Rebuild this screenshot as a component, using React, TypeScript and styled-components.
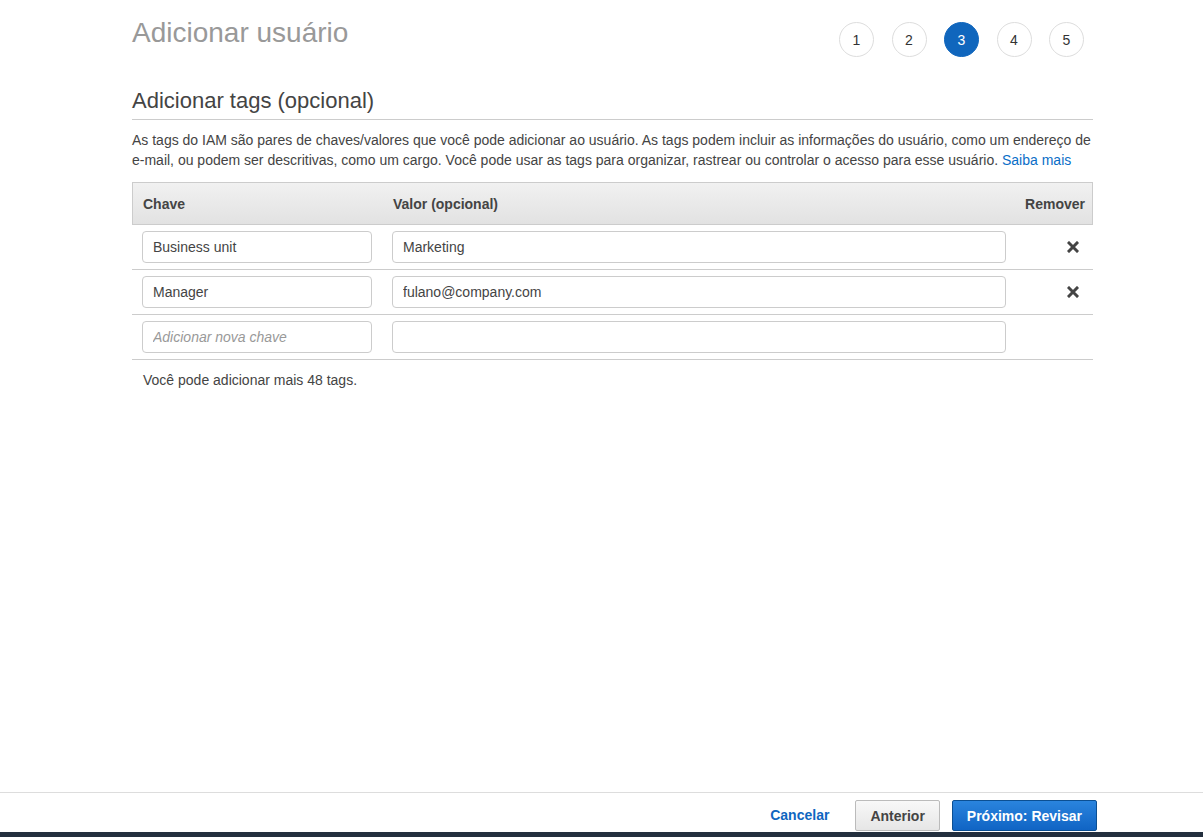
import React from 'react';
import styled, { createGlobalStyle } from 'styled-components';

const GlobalStyle = createGlobalStyle`
  html, body {
    margin: 0;
    padding: 0;
    background: #fff;
    font-family: "Liberation Sans", Arial, sans-serif;
    color: #444;
  }
  * { box-sizing: border-box; }
`;

const Page = styled.div`
  display: flex;
  flex-direction: column;
  min-height: 100vh;
`;

const Main = styled.main`
  flex: 1;
  padding: 0 110px 0 132px;
`;

const Content = styled.div`
  width: 961px;
`;

const TopRow = styled.div`
  display: flex;
  justify-content: space-between;
  align-items: flex-start;
  padding-top: 17px;
`;

const Title = styled.h1`
  margin: 0;
  font-size: 28px;
  font-weight: normal;
  color: #999;
  line-height: 32px;
`;

const Steps = styled.ol`
  display: flex;
  gap: 17.5px;
  list-style: none;
  margin: 5px 9px 0 0;
  padding: 0;
`;

const Step = styled.li<{ $active?: boolean }>`
  width: 35px;
  height: 35px;
  border-radius: 50%;
  display: flex;
  align-items: center;
  justify-content: center;
  font-size: 14px;
  border: 1px solid ${(p) => (p.$active ? '#1066bd' : '#ddd')};
  background: ${(p) => (p.$active ? '#1066bd' : '#fff')};
  color: ${(p) => (p.$active ? '#fff' : '#333')};
`;

const SectionTitle = styled.h2`
  margin: 30px 0 0;
  font-size: 22px;
  font-weight: normal;
  color: #444;
  line-height: 28px;
  padding-bottom: 4px;
  border-bottom: 1px solid #ccc;
`;

const Description = styled.p`
  margin: 10px 0 0;
  font-size: 14px;
  line-height: 20px;
  color: #444;
`;

const Link = styled.a`
  color: #0a6ec7;
  text-decoration: none;
`;

const Table = styled.div`
  margin-top: 12px;
`;

const Row = styled.div<{ $head?: boolean }>`
  display: grid;
  grid-template-columns: 250px 1fr 77px;
  align-items: center;
  height: ${(p) => (p.$head ? '43px' : '45px')};
  border-bottom: 1px solid #ccc;
  ${(p) =>
    p.$head &&
    `
    background: linear-gradient(#f1f1f1, #e2e2e2);
    border: 1px solid #ccc;
  `}
`;

const HeadCell = styled.div<{ $right?: boolean }>`
  font-size: 14px;
  font-weight: bold;
  color: #444;
  padding: 0 ${(p) => (p.$right ? '7px' : '10px')};
  text-align: ${(p) => (p.$right ? 'right' : 'left')};
`;

const Cell = styled.div`
  padding: 0 10px;
  display: flex;
  align-items: center;
  justify-content: center;
`;

const Input = styled.input`
  width: 100%;
  height: 32px;
  border: 1px solid #ccc;
  border-radius: 4px;
  padding: 0 10px;
  font-family: "Liberation Sans", Arial, sans-serif;
  font-size: 14px;
  color: #444;
  outline: none;
  &::placeholder {
    color: #999;
    font-style: italic;
  }
`;

const RemoveButton = styled.button`
  border: none;
  background: none;
  padding: 0;
  margin-left: 36px;
  cursor: pointer;
  display: flex;
`;

const Remaining = styled.p`
  margin: 12px 0 0 11px;
  font-size: 14px;
  color: #444;
`;

const Footer = styled.footer`
  border-top: 1px solid #ddd;
  height: 45px;
  border-bottom: 5px solid #232f3e;
  display: flex;
  justify-content: flex-end;
  align-items: flex-end;
  padding: 0 106px 1px 0;
`;

const CancelLink = styled.a`
  color: #0f66c0;
  font-weight: bold;
  font-size: 14px;
  text-decoration: none;
  margin-right: 26px;
  line-height: 31px;
`;

const Button = styled.button<{ $primary?: boolean }>`
  height: 31px;
  padding: 0 14px;
  border-radius: 2px;
  font-family: "Liberation Sans", Arial, sans-serif;
  font-size: 14px;
  font-weight: bold;
  margin-right: ${(p) => (p.$primary ? '0' : '12px')};
  border: 1px solid ${(p) => (p.$primary ? '#0b4f93' : '#bbb')};
  color: ${(p) => (p.$primary ? '#fff' : '#444')};
  background: ${(p) =>
    p.$primary
      ? 'linear-gradient(#2a84de, #1064c4)'
      : 'linear-gradient(#f8f8f8, #e6e6e6)'};
`;

const CloseIcon = () => (
  <svg width="12" height="12" viewBox="0 0 12 12">
    <path d="M2 2 L10 10 M10 2 L2 10" stroke="#444" strokeWidth="3" strokeLinecap="square" />
  </svg>
);

const tags = [
  { key: 'Business unit', value: 'Marketing' },
  { key: 'Manager', value: 'fulano@company.com' },
];

export default function App() {
  return (
    <Page>
      <GlobalStyle />
      <Main>
        <Content>
          <TopRow>
            <Title>Adicionar usuário</Title>
            <Steps>
              {[1, 2, 3, 4, 5].map((n) => (
                <Step key={n} $active={n === 3}>
                  {n}
                </Step>
              ))}
            </Steps>
          </TopRow>
          <SectionTitle>Adicionar tags (opcional)</SectionTitle>
          <Description>
            As tags do IAM são pares de chaves/valores que você pode adicionar ao usuário. As tags podem
            incluir as informações do usuário, como um endereço de e-mail, ou podem ser descritivas, como
            um cargo. Você pode usar as tags para organizar, rastrear ou controlar o acesso para esse
            usuário. <Link href="#">Saiba mais</Link>
          </Description>
          <Table>
            <Row $head>
              <HeadCell>Chave</HeadCell>
              <HeadCell>Valor (opcional)</HeadCell>
              <HeadCell $right>Remover</HeadCell>
            </Row>
            {tags.map((t) => (
              <Row key={t.key}>
                <Cell>
                  <Input defaultValue={t.key} />
                </Cell>
                <Cell>
                  <Input defaultValue={t.value} />
                </Cell>
                <Cell>
                  <RemoveButton aria-label="Remover">
                    <CloseIcon />
                  </RemoveButton>
                </Cell>
              </Row>
            ))}
            <Row>
              <Cell>
                <Input placeholder="Adicionar nova chave" />
              </Cell>
              <Cell>
                <Input />
              </Cell>
              <Cell />
            </Row>
          </Table>
          <Remaining>Você pode adicionar mais 48 tags.</Remaining>
        </Content>
      </Main>
      <Footer>
        <CancelLink href="#">Cancelar</CancelLink>
        <Button>Anterior</Button>
        <Button $primary>Próximo: Revisar</Button>
      </Footer>
    </Page>
  );
}
